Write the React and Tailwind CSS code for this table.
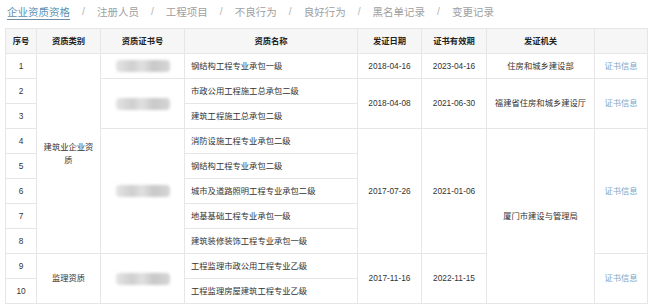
import React from "react";

const tabs = ["企业资质资格", "注册人员", "工程项目", "不良行为", "良好行为", "黑名单记录", "变更记录"];

const Blur = () => (
  <div className="mx-auto h-[12px] w-[54px] rounded-sm bg-[linear-gradient(90deg,#e4e4e4_0%,#cfcfcf_30%,#e0e0e0_48%,#c8c8c8_70%,#d6d6d6_100%)] blur-[1.5px]" />
);

const Link = () => <span className="text-[#7ba7c9]">证书信息</span>;

const td = "border border-[#e6e6e6] text-center h-[25px] p-0";
const tdName = "border border-[#e6e6e6] text-left pl-[6px] h-[25px] p-0";

export default function App() {
  return (
    <div
      className="w-[650px] h-[308px] bg-white text-[#333] overflow-hidden"
      style={{ fontFamily: '"Liberation Sans", "Noto Sans CJK SC", sans-serif' }}
    >
      <div className="flex items-center h-[28px] pl-[7px] pb-[4px] text-[10.5px] text-[#a0a0a0]">
        {tabs.map((t, i) => (
          <React.Fragment key={t}>
            {i > 0 && <span className="mx-[12px] text-[#b5b5b5]">/</span>}
            <span
              className={
                i === 0
                  ? "text-[#5d8fb3] border-b-[1.5px] border-[#6f8ea6] leading-[14px]"
                  : "leading-[14px]"
              }
            >
              {t}
            </span>
          </React.Fragment>
        ))}
      </div>
      <table className="ml-[5px] border-collapse table-fixed w-[642px] text-[8.3px]">
        <colgroup>
          <col className="w-[31px]" />
          <col className="w-[64px]" />
          <col className="w-[84px]" />
          <col className="w-[173px]" />
          <col className="w-[64px]" />
          <col className="w-[65px]" />
          <col className="w-[108px]" />
          <col className="w-[53px]" />
        </colgroup>
        <thead>
          <tr className="bg-[#f6f6f6] text-[#222] font-bold">
            <th className={td}>序号</th>
            <th className={td}>资质类别</th>
            <th className={td}>资质证书号</th>
            <th className={td}>资质名称</th>
            <th className={td}>发证日期</th>
            <th className={td}>证书有效期</th>
            <th className={td}>发证机关</th>
            <th className={td}></th>
          </tr>
        </thead>
        <tbody>
          <tr>
            <td className={td}>1</td>
            <td className={td} rowSpan={8}>
              <div className="px-[6px] leading-[13px]">建筑业企业资质</div>
            </td>
            <td className={td}><Blur /></td>
            <td className={tdName}>钢结构工程专业承包一级</td>
            <td className={td}>2018-04-16</td>
            <td className={td}>2023-04-16</td>
            <td className={td}>住房和城乡建设部</td>
            <td className={td}><Link /></td>
          </tr>
          <tr>
            <td className={td}>2</td>
            <td className={td} rowSpan={2}><Blur /></td>
            <td className={tdName}>市政公用工程施工总承包二级</td>
            <td className={td} rowSpan={2}>2018-04-08</td>
            <td className={td} rowSpan={2}>2021-06-30</td>
            <td className={td} rowSpan={2}>福建省住房和城乡建设厅</td>
            <td className={td} rowSpan={2}><Link /></td>
          </tr>
          <tr>
            <td className={td}>3</td>
            <td className={tdName}>建筑工程施工总承包二级</td>
          </tr>
          <tr>
            <td className={td}>4</td>
            <td className={td} rowSpan={5}><Blur /></td>
            <td className={tdName}>消防设施工程专业承包二级</td>
            <td className={td} rowSpan={5}>2017-07-26</td>
            <td className={td} rowSpan={5}>2021-01-06</td>
            <td className={td} rowSpan={7}>厦门市建设与管理局</td>
            <td className={td} rowSpan={5}><Link /></td>
          </tr>
          <tr>
            <td className={td}>5</td>
            <td className={tdName}>钢结构工程专业承包二级</td>
          </tr>
          <tr>
            <td className={td}>6</td>
            <td className={tdName}>城市及道路照明工程专业承包二级</td>
          </tr>
          <tr>
            <td className={td}>7</td>
            <td className={tdName}>地基基础工程专业承包一级</td>
          </tr>
          <tr>
            <td className={td}>8</td>
            <td className={tdName}>建筑装修装饰工程专业承包一级</td>
          </tr>
          <tr>
            <td className={td}>9</td>
            <td className={td} rowSpan={2}>监理资质</td>
            <td className={td} rowSpan={2}><Blur /></td>
            <td className={tdName}>工程监理市政公用工程专业乙级</td>
            <td className={td} rowSpan={2}>2017-11-16</td>
            <td className={td} rowSpan={2}>2022-11-15</td>
            <td className={td} rowSpan={2}><Link /></td>
          </tr>
          <tr>
            <td className={td}>10</td>
            <td className={tdName}>工程监理房屋建筑工程专业乙级</td>
          </tr>
        </tbody>
      </table>
    </div>
  );
}
